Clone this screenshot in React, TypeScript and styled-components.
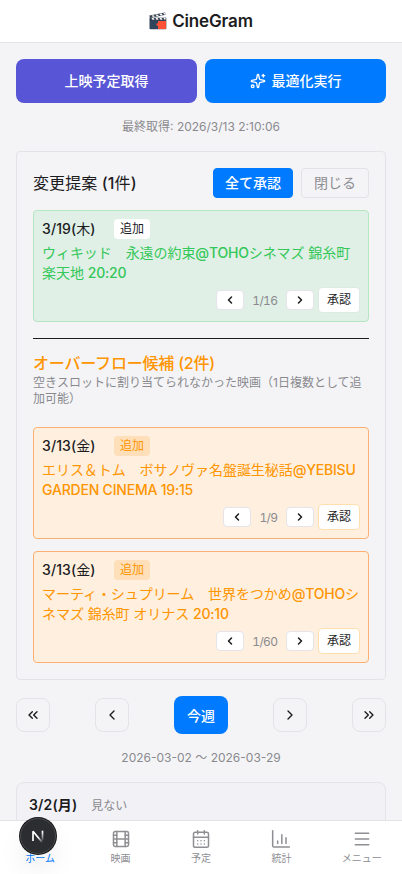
import React from "react";
import styled, { createGlobalStyle } from "styled-components";
import {
  Sparkles,
  Film,
  CalendarDays,
  Menu,
  ChevronLeft,
  ChevronRight,
  ChevronsLeft,
  ChevronsRight,
} from "lucide-react";

const GlobalStyle = createGlobalStyle`
  *, *::before, *::after { box-sizing: border-box; }
  html, body { margin: 0; padding: 0; }
  body {
    background: #f4f4f7;
    color: #1c1c1e;
    font-family: Inter, "Noto Sans CJK JP", sans-serif;
    font-size: 14px;
    -webkit-font-smoothing: antialiased;
  }
  button { font-family: inherit; margin: 0; padding: 0; cursor: pointer; }
`;

const Screen = styled.div`
  height: 874px;
  overflow: hidden;
  display: flex;
  flex-direction: column;
`;

const Header = styled.header`
  flex: none;
  height: 43px;
  background: #fff;
  border-bottom: 1px solid #e3e3e7;
  display: flex;
  align-items: center;
  justify-content: center;
  gap: 5px;
`;

const AppTitle = styled.h1`
  margin: 0;
  font-size: 17px;
  line-height: 24px;
  font-weight: 600;
  letter-spacing: -0.15px;
`;

const Content = styled.main`
  flex: 1;
  min-height: 0;
  overflow: hidden;
  padding: 16px 16px 0;
`;

const Actions = styled.div`
  display: grid;
  grid-template-columns: 1fr 1fr;
  gap: 8px;
`;

const ActionButton = styled.button<{ $color: string }>`
  height: 44px;
  border: 0;
  border-radius: 8px;
  background: ${(p) => p.$color};
  color: #fff;
  font-size: 14px;
  line-height: 20px;
  font-weight: 500;
  display: flex;
  align-items: center;
  justify-content: center;
  gap: 6px;
`;

const Caption = styled.p<{ $top: number; $bottom: number }>`
  margin: ${(p) => p.$top}px 0 ${(p) => p.$bottom}px;
  text-align: center;
  font-size: 12px;
  line-height: 16px;
  color: #8a8a8e;
`;

const Panel = styled.section`
  height: 529px;
  border: 1px solid #e4e4e8;
  border-radius: 4px;
  padding: 16px;
`;

const PanelHead = styled.div`
  display: flex;
  align-items: center;
  gap: 8px;
  margin-bottom: 12px;
`;

const PanelTitle = styled.h2`
  margin: 0;
  flex: 1;
  font-size: 16px;
  line-height: 24px;
  font-weight: 500;
  letter-spacing: 0.1px;
`;

const Kanji = styled.span`
  font-weight: 400;
`;

const HeadButton = styled.button<{ $filled?: boolean; $width: number }>`
  width: ${(p) => p.$width}px;
  height: 30px;
  border-radius: 4px;
  border: 1px solid ${(p) => (p.$filled ? "#007aff" : "#e3e3e7")};
  background: ${(p) => (p.$filled ? "#007aff" : "transparent")};
  color: ${(p) => (p.$filled ? "#fff" : "#8e8e93")};
  font-size: 14px;
  line-height: 20px;
  font-weight: ${(p) => (p.$filled ? 500 : 400)};
`;

type Tone = "green" | "orange";

const tones = {
  green: { bg: "#e0f0e6", border: "#b4e6c2", text: "#34c759", badge: "#fff", badgeText: "#1c1c1e", button: "#dfe9e4" },
  orange: { bg: "#feefdf", border: "#fcb173", text: "#ff9500", badge: "#ffdfb9", badgeText: "#ff9500", button: "#ffdfb0" },
};

const Card = styled.article<{ $tone: Tone }>`
  height: 112px;
  padding: 8px;
  border: 1px solid ${(p) => tones[p.$tone].border};
  border-radius: 4px;
  background: ${(p) => tones[p.$tone].bg};
  & + & { margin-top: 12px; }
`;

const CardTop = styled.div`
  display: grid;
  grid-template-columns: 72px auto;
  justify-content: start;
  align-items: center;
  height: 20px;
`;

const DateText = styled.span`
  font-size: 14px;
  line-height: 20px;
  font-weight: 500;
  letter-spacing: 0.1px;
`;

const Badge = styled.span<{ $tone: Tone }>`
  height: 20px;
  padding: 0 6px;
  border-radius: 4px;
  font-size: 12px;
  line-height: 20px;
  background: ${(p) => tones[p.$tone].badge};
  color: ${(p) => tones[p.$tone].badgeText};
`;

const MovieText = styled.p<{ $tone: Tone }>`
  margin: 4px -8px 0 0;
  font-size: 14px;
  line-height: 20px;
  color: ${(p) => tones[p.$tone].text};
  white-space: nowrap;
  letter-spacing: -0.06px;
`;

const Line = styled.span`
  display: block;
`;

const Latin = styled.span`
  font-weight: 450;
  letter-spacing: -0.2px;
`;

const Pager = styled.div`
  display: flex;
  justify-content: flex-end;
  align-items: center;
  margin-top: 4px;
  height: 26px;
`;

const StepButton = styled.button`
  width: 28px;
  height: 20px;
  border: 1px solid #e4e4ea;
  border-radius: 4px;
  background: #fff;
  color: #1c1c1e;
  display: flex;
  align-items: center;
  justify-content: center;
`;

const Count = styled.span`
  padding: 0 8.5px 0 8px;
  font-size: 12px;
  font-variant-numeric: tabular-nums;
  letter-spacing: -0.6px;
  color: #8a8a8e;
`;

const ApproveButton = styled.button<{ $tone: Tone }>`
  width: 42px;
  height: 26px;
  margin-left: 4px;
  border: 1px solid ${(p) => tones[p.$tone].button};
  border-radius: 4px;
  background: #fff;
  color: #1c1c1e;
  font-size: 12px;
  line-height: 16px;
`;

const Divider = styled.hr`
  margin: 16px 0 12px;
  border: 0;
  height: 1px;
  background: #1c1c1e;
`;

const OverflowTitle = styled.h3`
  margin: 0;
  font-size: 16px;
  line-height: 24px;
  font-weight: 500;
  letter-spacing: -0.2px;
  color: #ff9500;
`;

const OverflowNote = styled.p`
  margin: 0 0 20px;
  font-size: 12px;
  line-height: 16px;
  color: #8a8a8e;
  white-space: nowrap;
`;

const WeekNav = styled.nav`
  margin-top: 16px;
  height: 38px;
  display: flex;
  align-items: center;
  justify-content: space-between;
`;

const WeekButton = styled.button`
  width: 34px;
  height: 34px;
  border: 1px solid #e4e4e8;
  border-radius: 8px;
  background: transparent;
  color: #1c1c1e;
  display: flex;
  align-items: center;
  justify-content: center;
`;

const ThisWeek = styled.button`
  width: 54px;
  height: 38px;
  border: 0;
  border-radius: 8px;
  background: #007aff;
  color: #fff;
  font-size: 14px;
  font-weight: 500;
`;

const DayCard = styled.section`
  height: 80px;
  border: 1px solid #e4e4e8;
  border-radius: 8px;
  background: #f2f1f6;
  padding: 12px;
  display: flex;
  align-items: baseline;
  gap: 14px;
`;

const DayName = styled.strong`
  font-size: 14px;
  line-height: 20px;
  font-weight: 600;
  letter-spacing: 0.15px;
`;

const DayState = styled.span`
  font-size: 12px;
  line-height: 20px;
  color: #8a8a8e;
`;

const TabBar = styled.nav`
  flex: none;
  height: 54px;
  border-top: 1px solid #e3e3e7;
  background: #fff;
  display: grid;
  grid-template-columns: repeat(5, 1fr);
`;

const Tab = styled.a<{ $active?: boolean }>`
  position: relative;
  display: flex;
  flex-direction: column;
  align-items: center;
  padding-top: 8px;
  gap: 1px;
  color: ${(p) => (p.$active ? "#007aff" : "#8e8e93")};
  font-size: 10px;
  line-height: 16px;
`;

const TabIcon = styled.span`
  height: 20px;
  display: flex;
`;

/* Floating dev indicator that overlaps the first tab. */
const DevBadge = styled.div`
  position: absolute;
  left: 20px;
  top: -3px;
  width: 36px;
  height: 36px;
  border-radius: 50%;
  background: #2c2d31;
  border: 1px solid #494a4d;
  box-shadow: 0 0 0 1px #171717, 0 16px 28px -4px rgba(0, 0, 0, 0.1);
  display: flex;
  align-items: center;
  justify-content: center;
`;

const ClapperIcon = () => (
  <svg width="18" height="18" viewBox="0 0 18 18">
    <path d="M.5 8h16.800v8.300a.9.9 0 0 1-.9.9H1.400a.9.9 0 0 1-.9-.9z" fill="#30445b" />
    <path d="M9 9h8.100v8H9v-3.300a1.250 1.250 0 1 1 0-2.400z" fill="#ff5136" />
    <path d="M.5 5.700h16.800v2.500H.5z" fill="#35404f" />
    <path d="M2.500 6h2l1 1.700h-2zM6.500 6h2l1 1.700h-2zM10.500 6h2l1 1.700h-2zM14.500 6h2v1.700h-1z" fill="#fff" />
    <path d="M.4 3.600 16 .4l.5 2.400L.9 6z" fill="#35404f" />
    <path d="m2.600 3.600 2-.4 1.300 1.400-2 .4zM6.500 2.800l2-.4 1.300 1.400-2 .4zM10.400 2l2-.4L13.700 3l-2 .4zM14.200 1.200l1.700-.3.300 1.500-.9.200z" fill="#fff" />
  </svg>
);

const StatsIcon = () => (
  <svg width="20" height="20" viewBox="0 0 24 24" fill="none" stroke="currentColor" strokeWidth="1.8" strokeLinecap="round" strokeLinejoin="round">
    <path d="M2 2v18a1.500 1.500 0 0 0 1.500 1.500H22M8 17.500v-3M13 17.500V7M18 17.500v-7" />
  </svg>
);

const DevMark = () => (
  <svg width="16" height="16" viewBox="0 0 16 16" fill="none">
    <defs>
      <linearGradient id="leftFade" x1="9" y1="9" x2="13" y2="14.5" gradientUnits="userSpaceOnUse">
        <stop stopColor="#fff" />
        <stop offset="1" stopColor="#fff" stopOpacity="0" />
      </linearGradient>
      <linearGradient id="rightFade" x1="0" y1="4" x2="0" y2="13" gradientUnits="userSpaceOnUse">
        <stop stopColor="#fff" />
        <stop offset="1" stopColor="#fff" stopOpacity="0.1" />
      </linearGradient>
    </defs>
    <path d="M3 13V3.200L12.300 14.500" stroke="url(#leftFade)" strokeWidth="1.700" strokeLinejoin="bevel" />
    <path d="M12.500 2.700V12.500" stroke="url(#rightFade)" strokeWidth="1.700" />
  </svg>
);

interface Proposal {
  tone: Tone;
  date: string;
  weekday: string;
  lines: string[];
  count: string;
}

const proposals: Proposal[] = [
  {
    tone: "green",
    date: "3/19",
    weekday: "木",
    lines: ["ウィキッド　永遠の約束@TOHOシネマズ 錦糸町", "楽天地 20:20"],
    count: "1/16",
  },
];

const overflow: Proposal[] = [
  {
    tone: "orange",
    date: "3/13",
    weekday: "金",
    lines: ["エリス＆トム　ボサノヴァ名盤誕生秘話@YEBISU", "GARDEN CINEMA 19:15"],
    count: "1/9",
  },
  {
    tone: "orange",
    date: "3/13",
    weekday: "金",
    lines: ["マーティ・シュプリーム　世界をつかめ@TOHOシ", "ネマズ 錦糸町 オリナス 20:10"],
    count: "1/60",
  },
];

/* Latin runs are set slightly heavier than the Japanese around them. */
const MixedText = ({ text }: { text: string }) => (
  <>
    {text.split(/([@A-Z0-9:][@A-Z0-9: ]*)/).map((part, i) =>
      i % 2 ? <Latin key={i}>{part}</Latin> : part
    )}
  </>
);

const ProposalCard = ({ tone, date, weekday, lines, count }: Proposal) => (
  <Card $tone={tone}>
    <CardTop>
      <DateText>{date}(<Kanji>{weekday}</Kanji>)</DateText>
      <Badge $tone={tone}>追加</Badge>
    </CardTop>
    <MovieText $tone={tone}>
      {lines.map((line) => (
        <Line key={line}><MixedText text={line} /></Line>
      ))}
    </MovieText>
    <Pager>
      <StepButton aria-label="前へ"><ChevronLeft size={12} strokeWidth={3} /></StepButton>
      <Count>{count}</Count>
      <StepButton aria-label="次へ"><ChevronRight size={12} strokeWidth={3} /></StepButton>
      <ApproveButton $tone={tone}>承認</ApproveButton>
    </Pager>
  </Card>
);

export default function App() {
  return (
    <>
      <GlobalStyle />
      <Screen>
        <Header>
          <ClapperIcon />
          <AppTitle>CineGram</AppTitle>
        </Header>
        <Content>
          <Actions>
            <ActionButton $color="#5856d6">上映予定取得</ActionButton>
            <ActionButton $color="#007aff">
              <Sparkles size={16} />
              最適化実行
            </ActionButton>
          </Actions>
          <Caption $top={16} $bottom={16}>最終取得: 2026/3/13 2:10:06</Caption>
          <Panel>
            <PanelHead>
              <PanelTitle><Kanji>変更提案</Kanji> (1<Kanji>件</Kanji>)</PanelTitle>
              <HeadButton $filled $width={80}>全て承認</HeadButton>
              <HeadButton $width={68}>閉じる</HeadButton>
            </PanelHead>
            {proposals.map((p) => <ProposalCard key={p.count} {...p} />)}
            <Divider />
            <OverflowTitle>オーバーフロー候補 (2件)</OverflowTitle>
            <OverflowNote>
              <Line>空きスロットに割り当てられなかった映画（1日複数として追</Line>
              <Line>加可能）</Line>
            </OverflowNote>
            {overflow.map((p) => <ProposalCard key={p.count} {...p} />)}
          </Panel>
          <WeekNav>
            <WeekButton aria-label="4週前"><ChevronsLeft size={16} /></WeekButton>
            <WeekButton aria-label="前週"><ChevronLeft size={16} /></WeekButton>
            <ThisWeek>今週</ThisWeek>
            <WeekButton aria-label="翌週"><ChevronRight size={16} /></WeekButton>
            <WeekButton aria-label="4週後"><ChevronsRight size={16} /></WeekButton>
          </WeekNav>
          <Caption $top={16} $bottom={16}>2026-03-02 〜 2026-03-29</Caption>
          <DayCard>
            <DayName>3/2(月)</DayName>
            <DayState>見ない</DayState>
          </DayCard>
        </Content>
        <TabBar>
          <Tab $active>
            <TabIcon><svg width="20" height="20" /></TabIcon>
            ホーム
            <DevBadge><DevMark /></DevBadge>
          </Tab>
          <Tab><TabIcon><Film size={20} strokeWidth={1.8} /></TabIcon>映画</Tab>
          <Tab><TabIcon><CalendarDays size={20} strokeWidth={1.8} /></TabIcon>予定</Tab>
          <Tab><TabIcon><StatsIcon /></TabIcon>統計</Tab>
          <Tab><TabIcon><Menu size={20} strokeWidth={1.8} /></TabIcon>メニュー</Tab>
        </TabBar>
      </Screen>
    </>
  );
}
